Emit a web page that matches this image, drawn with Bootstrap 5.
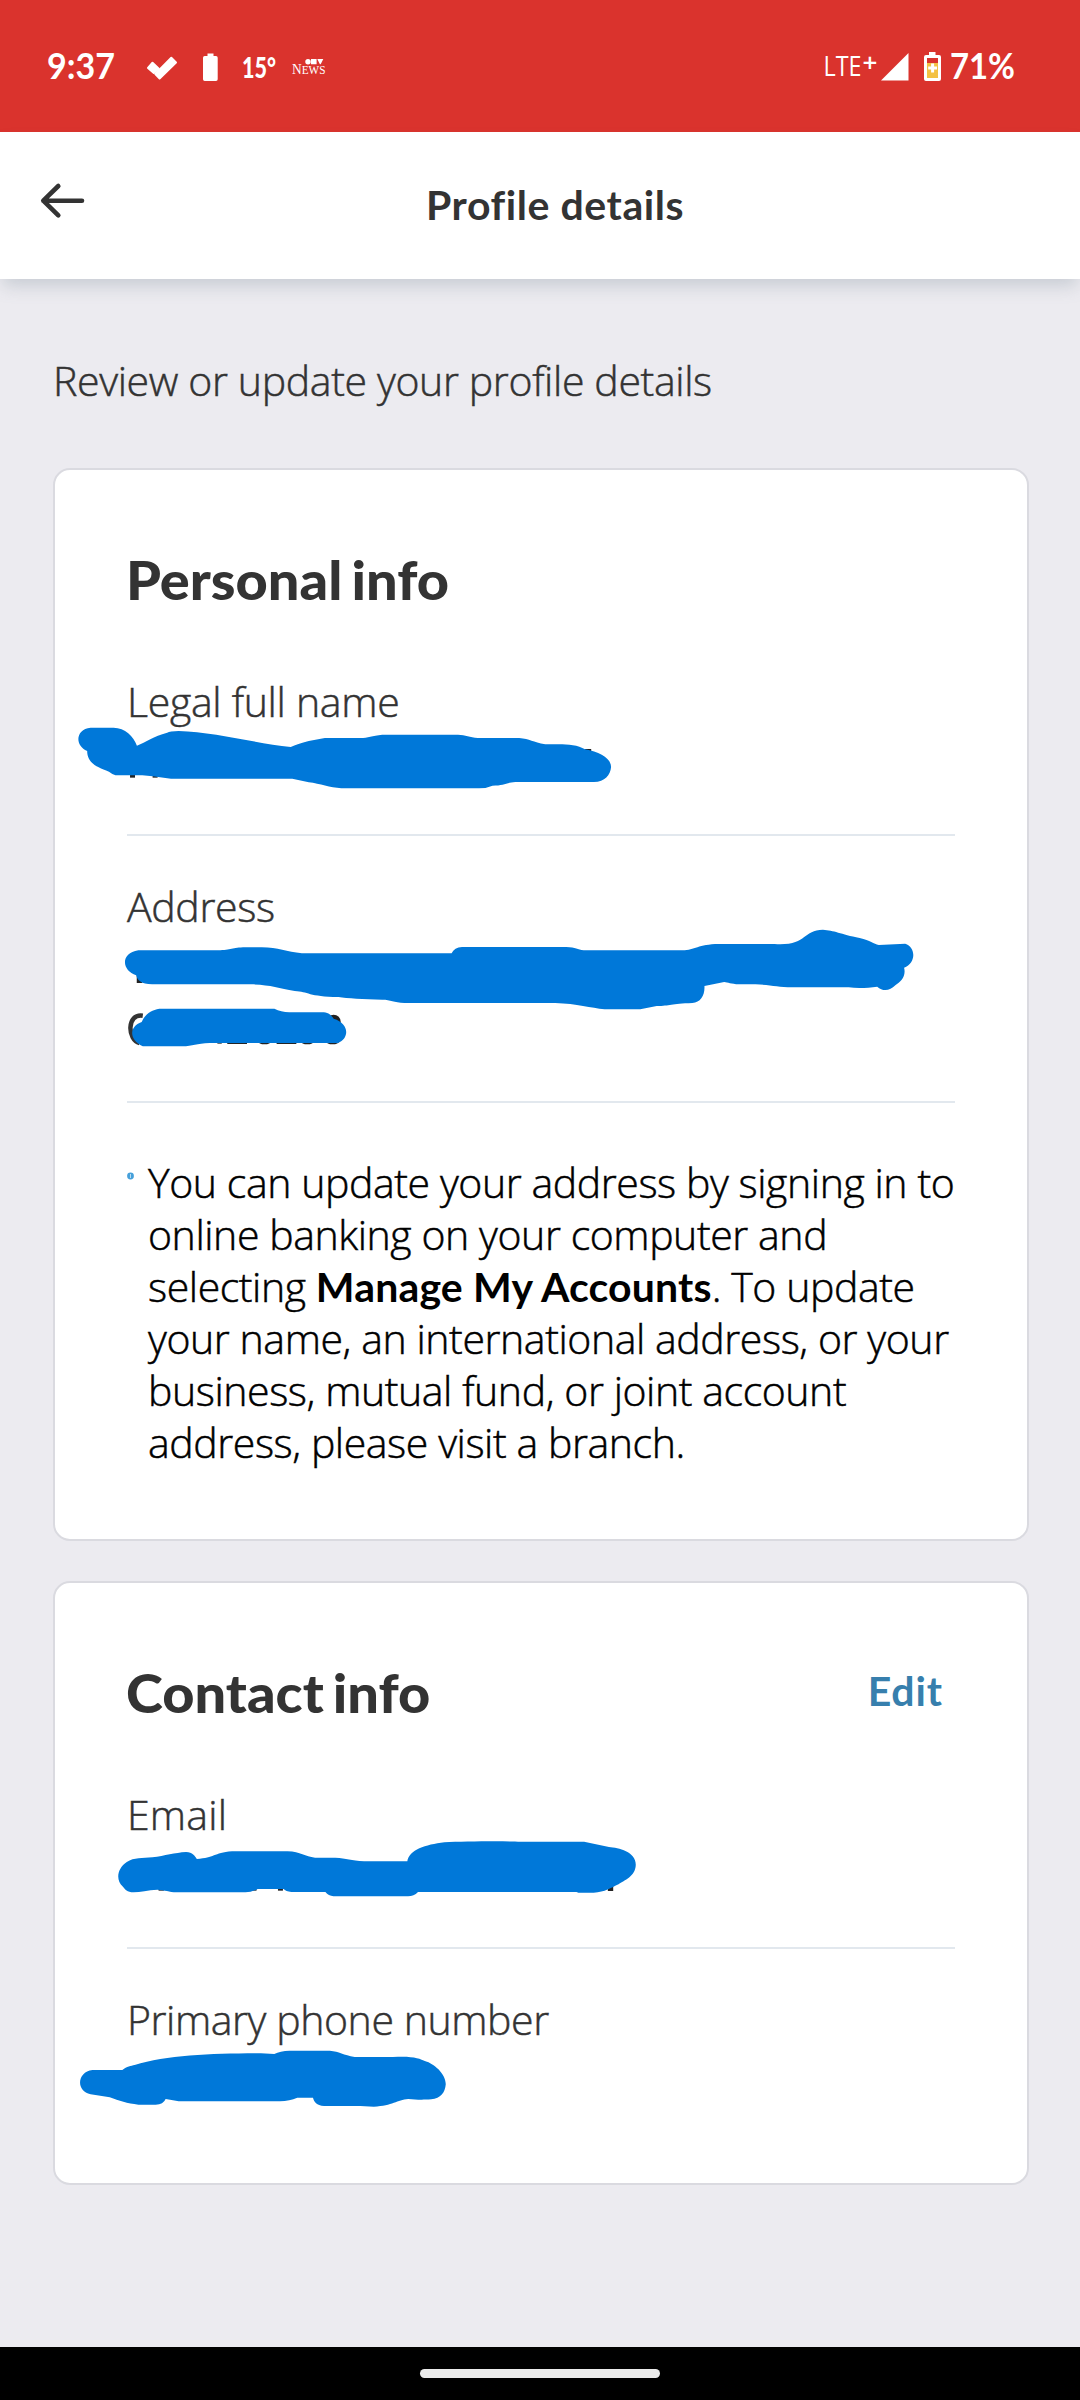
<!DOCTYPE html>
<html lang="en">
<head>
<meta charset="utf-8">
<meta name="viewport" content="width=device-width, initial-scale=1">
<title>Profile details</title>
<link href="https://cdn.jsdelivr.net/npm/bootstrap@5.3.0/dist/css/bootstrap.min.css" rel="stylesheet">
<style>
  body { background: #ecebf0; font: 300 41px/52px "Open Sans", "Noto Sans", sans-serif; color: #333; }
  .screen { width: 1080px; height: 2400px; overflow: hidden; }
  svg { display: block; overflow: visible; flex: none; }
  .status-bar { background: #da332d; height: 132px; padding: 40px 66px 0 48px; }
  .status-bar text { fill: #fff; font-family: Lato, sans-serif; font-weight: 700; }
  .app-bar { height: 147px; background: #fff; padding: 46px 0 0 41px; z-index: 1; box-shadow: 0 10px 16px -3px rgba(120, 135, 150, .3); }
  .app-title { font: 700 41px/52px Lato, sans-serif; letter-spacing: .57px; margin: 1px 0 0 341px; }
  .content { padding: 75px 51px 0 53px; }
  .thin { -webkit-text-stroke: .5px currentColor; }
  .intro { letter-spacing: -.36px; margin-bottom: 62px; }
  .panel { border: 2px solid #dadae0; border-radius: 17px; padding: 78px 72px 0; --bs-card-bg: #fff; color: #333; }
  .panel + .panel { margin-top: 40px; }
  .panel-title { font: 900 53px/64px Lato, sans-serif; word-spacing: -4px; margin: 0 0 63px -1px; transform: scaleX(1.055); transform-origin: 0 0; }
  .rule { border-bottom: 2px solid #e2e8ee; }
  .field + .field { padding-top: 44px; }
  .redacted { position: relative; }
  .redacted svg { position: absolute; left: 0; top: -1px; }
  .redacted path { fill: #0078d9; }
  .note { padding: 53px 0 71px; color: #000; }
  .note p { letter-spacing: -.42px; margin-left: 14px; white-space: nowrap; }
  .note strong { font: 700 41px/1 Lato, sans-serif; letter-spacing: .15px; -webkit-text-stroke: 0; }
  .edit-link { font: 700 41px/52px Lato, sans-serif; letter-spacing: .9px; color: #377fad; margin: 4px 12px 0 0; }
  .nav-area { height: 53px; background: #000; padding-top: 22px; }
  .nav-pill { width: 240px; height: 9px; background: #ebebeb; }
</style>
</head>
<body>
<div class="screen d-flex flex-column">
  <div class="status-bar d-flex align-items-start justify-content-between">
    <div class="d-flex">
      <svg width="66" height="52" viewBox="48 40 66 52"><text x="47" y="79.300" font-size="36.500" textLength="68" lengthAdjust="spacingAndGlyphs">9:37</text></svg>
      <svg class="ms-4" style="padding-left:9px" width="39" height="52" viewBox="147 40 30 52"><g fill="#fff" stroke="#fff" stroke-width="2" stroke-linejoin="round"><path d="M148 68l4.500-5.300 6.300 6-5 4.300z"/><path d="M155.300 74l16-16.200 4.700 4.700-16.400 16z"/></g></svg>
      <svg style="margin-left:26px" width="15" height="52" viewBox="203 40 15 52"><path fill="#fff" d="M207.500 53.500h6V56h2.500q1.700 0 1.700 1.700v21.600q0 1.700-1.700 1.700h-11.300q-1.700 0-1.700-1.700V57.700q0-1.700 1.700-1.700h2.800z"/></svg>
      <svg style="margin-left:25px" width="33" height="52" viewBox="243 40 33 52"><text x="242" y="77.500" font-size="29" textLength="34" lengthAdjust="spacingAndGlyphs" style="font-weight:900">15°</text></svg>
      <svg style="margin-left:16px" width="33" height="52" viewBox="292 40 33 52"><text x="292" y="73.800" font-size="15.500" textLength="33.500" lengthAdjust="spacingAndGlyphs" style="font-family:'Liberation Serif',serif;font-weight:400">N<tspan font-size="13">EWS</tspan></text><g fill="#fff"><circle cx="308" cy="61.700" r="2.700"/><path d="M311 59h5.600v5.300H311zM317.300 59h6l-2.600 5.300h-.8z"/></g></svg>
    </div>
    <div class="d-flex">
      <svg width="51" height="52" viewBox="825 40 51 52"><text x="823.500" y="76.300" font-size="27.500" textLength="38" lengthAdjust="spacingAndGlyphs" style="font-family:'Open Sans',sans-serif;font-weight:400">LTE</text><text x="862.500" y="71.500" font-size="26" style="font-family:'Open Sans',sans-serif;font-weight:600">+</text></svg>
      <svg style="margin-left:5px" width="28" height="52" viewBox="881 40 28 52"><path fill="#fff" d="M881 80.500h27.500V53z"/></svg>
      <svg style="margin-left:15px" width="17" height="52" viewBox="924 40 17 52"><path fill="#fff" d="M929 52h6.500v3h3.500q2 0 2 2v22q0 2-2 2h-13q-2 0-2-2V57q0-2 2-2h3z"/><path fill="#da332d" d="M927 58h11v5h-11z"/><path fill="#f3c143" d="M927 63h11v15h-11z"/><path stroke="#fff" stroke-width="3" d="M928.200 68h8.800M932.600 63.600v8.800"/></svg>
      <svg style="margin-left:10px" width="63" height="52" viewBox="951 40 63 52"><text x="950" y="79.300" font-size="36.500" textLength="65" lengthAdjust="spacingAndGlyphs">71%</text></svg>
    </div>
  </div>

  <header class="app-bar d-flex align-items-start position-relative">
    <svg width="44" height="46" viewBox="41 178 44 46" fill="none" stroke="#333" stroke-width="4.600" stroke-linecap="round" stroke-linejoin="round"><path d="M82 200.700H43.300M58.300 186l-15 14.700 15 14.700"/></svg>
    <h1 class="app-title">Profile details</h1>
  </header>

  <main class="content flex-grow-1">
    <p class="intro thin">Review or update your profile details</p>

    <section class="card panel">
      <h2 class="panel-title">Personal info</h2>
      <div class="field rule">
        <div class="thin" style="letter-spacing:-.3px">Legal full name</div>
        <div class="redacted" style="height:107px">
          <svg width="1" height="1"><g transform="translate(-67 -66) scale(.3827 .3333)">
            <g fill="#222"><rect x="183" y="340" width="13" height="13"/><rect x="242" y="340" width="13" height="13"/><rect x="1372" y="267" width="16" height="14"/></g>
            <path d="M80 203H140C170 204 192 228 201 257C225 247 244 228 280 218Q287 213 310 213C400 215 510 250 603 261Q620 252 650 243L692 234H785C805 234 815 227 842 224H1040C1060 225 1070 232 1092 234H1200C1228 236 1235 247 1268 253C1300 253 1345 248 1372 268C1410 276 1440 295 1440 321C1438 345 1424 366 1395 366H1190C1165 368 1160 377 1130 377Q1115 385 1095 385H735C705 383 680 371 650 367L607 356H290L242 349L215 346H145Q138 344 128 335C95 321 71 308 71 273C38 258 40 207 80 203Z"/>
          </g></svg>
        </div>
      </div>
      <div class="field rule">
        <div class="thin" style="letter-spacing:-.33px">Address</div>
        <div class="redacted" style="height:169px">
          <svg width="1" height="1"><g transform="translate(-27 -61) scale(.5485 .3333)">
            <g fill="#222"><rect x="67" y="315" width="10" height="24"/><rect x="214" y="510" width="8" height="11"/><rect x="232" y="510" width="36" height="12"/><ellipse cx="300" cy="514" rx="12" ry="9"/><rect x="322" y="510" width="36" height="12"/><ellipse cx="378" cy="514" rx="12" ry="9"/><ellipse cx="424" cy="514" rx="12" ry="9"/><ellipse cx="426" cy="456" rx="13" ry="22"/></g>
            <path d="M78 437C48 430 50 510 72 519" stroke="#333" stroke-width="4.500" style="fill:none" vector-effect="non-scaling-stroke"/>
            <path d="M70 241H215C240 241 240 232 265 232H295C325 232 340 246 368 250H641Q646 232 660 231H850C868 232 870 239 882 241H1062C1085 240 1090 223 1128 222H1230C1290 228 1280 180 1318 179C1338 181 1350 192 1385 204C1405 212 1410 222 1420 225L1468 221C1488 232 1488 280 1466 293C1470 320 1460 335 1450 346C1440 363 1427 365 1417 350C1400 354 1380 355 1365 352H1262C1235 351 1225 345 1195 343H1165C1150 342 1145 337 1138 336L1102 348C1103 375 1095 398 1080 399C1040 401 1040 408 1015 408L985 418H920C895 414 870 401 830 399H555C535 397 530 389 515 389C480 388 450 385 435 381C380 380 380 365 355 363C325 354 310 344 275 343H95C75 343 68 330 66 316C40 302 36 250 70 241Z"/>
            <path d="M108 416H318Q330 426 345 427H408C418 428 422 437 426 446C455 460 455 505 434 519H200C175 520 170 529 150 529H78C53 510 52 470 76 456C82 432 94 420 108 416Z"/>
          </g></svg>
        </div>
      </div>
      <div class="note d-flex align-items-start">
        <svg style="margin-top:16px" width="7" height="8" viewBox="0 0 7 8"><circle cx="3.500" cy="4" r="3.400" fill="#46a0da"/><path d="M3.500 2v4" stroke="#b9dcf2"/></svg>
        <p class="thin mb-0">You can update your address by signing in to<br>online banking on your computer and<br>selecting <strong>Manage My Accounts</strong>. To update<br>your name, an international address, or your<br>business, mutual fund, or joint account<br>address, please visit a branch.</p>
      </div>
    </section>

    <section class="card panel">
      <div class="d-flex justify-content-between align-items-start">
        <h2 class="panel-title">Contact info</h2>
        <a class="edit-link text-decoration-none" href="#">Edit</a>
      </div>
      <div class="field rule">
        <div class="thin" style="letter-spacing:.2px">Email</div>
        <div class="redacted" style="height:107px">
          <svg width="1" height="1"><g transform="translate(-27 -69) scale(.3827 .3333)">
            <g fill="#222"><rect x="153" y="350" width="14" height="12"/><rect x="396" y="350" width="13" height="12"/><rect x="465" y="350" width="13" height="12"/><rect x="1327" y="345" width="14" height="18"/></g>
            <path d="M137 262C170 257 195 248 225 246C242 246 248 258 253 267C300 264 295 249 345 244H490C525 245 535 260 562 263H615C645 265 655 271 690 274H803C808 240 850 224 900 217C950 214 1050 213 1100 215H1265L1330 231C1355 233 1400 245 1400 284C1399 320 1370 330 1355 343C1335 353 1320 367 1290 368H1250L1245 366H831Q820 379 805 379H610Q597 377 589 366H500Q485 364 480 357H412Q395 367 380 367H200C180 366 170 360 150 359C125 360 105 367 88 367C70 366 66 358 60 350C40 330 45 295 70 276C90 262 110 265 137 262Z"/>
          </g></svg>
        </div>
      </div>
      <div class="field">
        <div class="thin" style="letter-spacing:-.42px">Primary phone number</div>
        <div class="redacted" style="height:138px">
          <svg width="1" height="1"><g transform="translate(-67 -64) scale(.3827 .3333)">
            <path d="M85 270H163C175 258 185 258 195 255C280 225 400 220 525 220L560 222Q575 213 600 212H705C730 214 740 225 770 231H870C920 227 940 235 955 244C975 250 1008 280 1008 313C1006 338 995 355 970 358C945 360 930 359 910 357C880 360 870 377 820 380L785 378H690C670 376 664 365 661 353H620Q600 363 575 364H310Q290 360 276 357Q270 374 250 374H205C175 371 155 362 130 352L80 343C40 333 45 275 85 270Z"/>
          </g></svg>
        </div>
      </div>
    </section>
  </main>

  <div class="nav-area"><div class="nav-pill rounded-pill mx-auto"></div></div>
</div>
<script src="https://cdn.jsdelivr.net/npm/bootstrap@5.3.0/dist/js/bootstrap.bundle.min.js"></script>
</body>
</html>
